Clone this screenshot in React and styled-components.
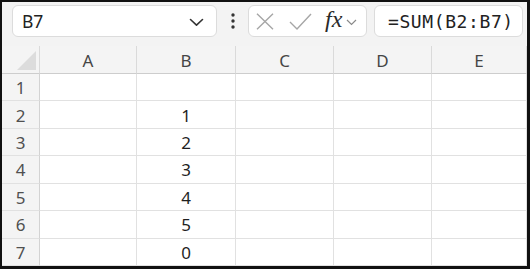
import React from "react";
import styled, { createGlobalStyle } from "styled-components";

const Global = createGlobalStyle`
  html, body { margin: 0; padding: 0; background: #fff; }
  * { box-sizing: border-box; }
`;

const Frame = styled.div`
  width: 530px;
  height: 269px;
  border-style: solid;
  border-color: #111;
  border-width: 2px 3px 3px 2px;
  display: flex;
  flex-direction: column;
  font-family: "Noto Sans", "Open Sans", sans-serif;
  background: #fff;
  overflow: hidden;
`;

const Toolbar = styled.div`
  height: 44px;
  flex: none;
  background: #f3f3f3;
  display: flex;
  align-items: flex-start;
  padding: 3px 0 0 10px;
`;

const Box = styled.div`
  height: 32px;
  width: ${(p) => p.$w}px;
  background: #fff;
  border: 1px solid #dcdcdc;
  border-radius: 6px;
  display: flex;
  align-items: center;
  flex: none;
`;

const NameText = styled.span`
  flex: 1;
  padding-left: 9px;
  font-size: 17.5px;
  color: #222;
`;

const IconSlot = styled.span`
  display: flex;
  align-items: center;
  justify-content: center;
  margin: ${(p) => p.$m || "0"};
`;

const Dots = styled.div`
  width: 31px;
  height: 32px;
  display: flex;
  align-items: center;
  justify-content: center;
  flex: none;
`;

const Fx = styled.span`
  font-family: "Liberation Serif", serif;
  font-style: italic;
  font-size: 24px;
  color: #2a2a2a;
  line-height: 1;
  margin: -4px 0 0 ${(p) => p.$ml}px;
`;

const FormulaText = styled.span`
  padding-left: 13px;
  font-family: "DejaVu Sans Mono", "Liberation Mono", monospace;
  font-size: 18px;
  letter-spacing: 0.6px;
  color: #222;
`;

const Sheet = styled.div`
  flex: 1;
  display: grid;
  grid-template-columns: 38px 97px 99px 98px 98px 1fr;
  grid-template-rows: 28px repeat(7, 1fr);
`;

const Cell = styled.div`
  border-right: 1px solid #e1e1e1;
  border-bottom: 1px solid #e1e1e1;
  display: flex;
  align-items: center;
  justify-content: center;
  font-size: 17px;
  color: #1f1f1f;
  padding-top: 1px;
`;

const ColHead = styled(Cell)`
  background: #f4f4f4;
  border-bottom: 1px solid #cdcdcd;
  border-right: 1px solid #dadada;
  color: #454545;
  padding-top: 2px;
`;

const RowHead = styled(Cell)`
  background: #f4f4f4;
  border-right: 1px solid #d3d3d3;
  border-bottom: 1px solid #e1e1e1;
  color: #505050;
  padding-left: 0;
`;

const Corner = styled(ColHead)`
  align-items: flex-end;
  justify-content: flex-end;
  padding: 0 3px 3px 0;
`;

const cols = ["A", "B", "C", "D", "E"];
const values = ["", "1", "2", "3", "4", "5", "0"];

export default function App() {
  return (
    <>
      <Global />
      <Frame>
        <Toolbar>
          <Box $w={205}>
            <NameText>B7</NameText>
            <IconSlot $m="2px 12px 0 0">
              <svg width="15" height="9" viewBox="0 0 15 9">
                <path d="M1.5 1.5 L7.5 7.2 L13.5 1.5" fill="none" stroke="#333" strokeWidth="1.6" strokeLinecap="round" strokeLinejoin="round" />
              </svg>
            </IconSlot>
          </Box>
          <Dots>
            <svg width="4" height="16" viewBox="0 0 4 16">
              <circle cx="2" cy="2" r="1.7" fill="#333" />
              <circle cx="2" cy="8" r="1.7" fill="#333" />
              <circle cx="2" cy="14" r="1.7" fill="#333" />
            </svg>
          </Dots>
          <Box $w={119}>
            <IconSlot $m="0 0 0 7px">
              <svg width="18" height="17" viewBox="0 0 18 17">
                <path d="M1 0.8 L17 16.2 M17 0.8 L1 16.2" stroke="#a6a6a6" strokeWidth="1.4" />
              </svg>
            </IconSlot>
            <IconSlot $m="0 0 0 15px">
              <svg width="23" height="17" viewBox="0 0 23 17">
                <path d="M1 9 L8 16 L22 1" fill="none" stroke="#a6a6a6" strokeWidth="1.4" />
              </svg>
            </IconSlot>
            <Fx $ml={13}>fx</Fx>
            <IconSlot $m="2px 0 0 4px">
              <svg width="11" height="7" viewBox="0 0 11 7">
                <path d="M1 1 L5.5 5.5 L10 1" fill="none" stroke="#8a8a8a" strokeWidth="1.2" />
              </svg>
            </IconSlot>
          </Box>
          <IconSlot $m="0 0 0 7px">
            <Box $w={149}>
              <FormulaText>=SUM(B2:B7)</FormulaText>
            </Box>
          </IconSlot>
        </Toolbar>
        <Sheet>
          <Corner>
            <svg width="19" height="19" viewBox="0 0 19 19">
              <path d="M19 0 L19 19 L0 19 Z" fill="#dcdcdc" />
            </svg>
          </Corner>
          {cols.map((c) => (
            <ColHead key={c}>{c}</ColHead>
          ))}
          {values.map((v, i) => (
            <React.Fragment key={i}>
              <RowHead>{i + 1}</RowHead>
              <Cell />
              <Cell>{v}</Cell>
              <Cell />
              <Cell />
              <Cell />
            </React.Fragment>
          ))}
        </Sheet>
      </Frame>
    </>
  );
}
